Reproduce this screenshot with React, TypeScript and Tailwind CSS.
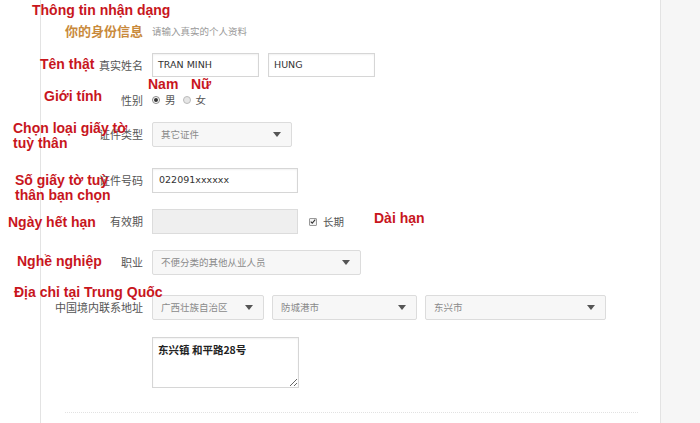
import React from "react";

const cjk = { fontFamily: '"Noto Sans CJK SC", "Liberation Sans", sans-serif' };

const Arrow = () => (
  <span className="h-0 w-0 border-x-[4px] border-t-[5px] border-x-transparent border-t-[#555]" />
);

const Select = ({ text, className }: { text: string; className: string }) => (
  <div
    className={`flex h-[25px] items-center justify-between rounded-[2px] border border-[#dcdcdc] bg-[#f7f7f7] pl-[8px] pr-[10px] text-[9.5px] text-[#8a8a8a] ${className}`}
  >
    <span>{text}</span>
    <Arrow />
  </div>
);

const Row = ({
  label,
  className = "",
  children,
}: {
  label: string;
  className?: string;
  children: React.ReactNode;
}) => (
  <div className={`flex items-center gap-[9px] ${className}`}>
    <div className="w-[102px] shrink-0 text-right text-[11px] text-[#555]">{label}</div>
    {children}
  </div>
);

const Note = ({ text, className }: { text: React.ReactNode; className: string }) => (
  <div
    className={`absolute text-[14px] font-bold leading-[15px] text-[#c8161d] ${className}`}
    style={{ fontFamily: '"Liberation Sans", Arial, sans-serif' }}
  >
    {text}
  </div>
);

export default function App() {
  return (
    <div className="relative flex h-[423px] w-[700px] overflow-hidden bg-white" style={cjk}>
      <div className="w-[40px] shrink-0" />
      <div className="flex w-[621px] shrink-0 flex-col border-x border-[#e3e3e3] pt-[22px]">
        <div className="flex h-[18px] items-center gap-[9px]">
          <div className="w-[102px] shrink-0 text-right text-[13px] font-bold text-[#c98a3c]">
            你的身份信息
          </div>
          <span className="text-[9.5px] text-[#999]">请输入真实的个人资料</span>
        </div>

        <Row label="真实姓名" className="mt-[13px]">
          <div className="flex gap-[9px]">
            {["TRAN MINH", "HUNG"].map((v) => (
              <div
                key={v}
                className="flex h-[24px] w-[107px] items-center border border-[#d6d6d6] px-[5px] text-[9.5px] text-[#333] shadow-[inset_0_1px_2px_rgba(0,0,0,0.06)]"
                style={{ fontFamily: '"DejaVu Sans", sans-serif' }}
              >
                {v}
              </div>
            ))}
          </div>
        </Row>

        <Row label="性别" className="mt-[15px] h-[16px]">
          <div className="flex items-center text-[10.5px] text-[#555]">
            <span className="flex h-[8px] w-[8px] items-center justify-center rounded-full border border-[#888] bg-white">
              <span className="h-[4px] w-[4px] rounded-full bg-[#333]" />
            </span>
            <span className="ml-[5px]">男</span>
            <span className="ml-[7px] h-[8px] w-[8px] rounded-full border border-[#bbb] bg-[#e6e6e6]" />
            <span className="ml-[5px]">女</span>
          </div>
        </Row>

        <Row label="证件类型" className="mt-[14px]">
          <Select text="其它证件" className="w-[140px]" />
        </Row>

        <Row label="证件号码" className="mt-[21px]">
          <div
            className="flex h-[25px] w-[146px] items-center border border-[#d6d6d6] px-[6px] text-[9.5px] text-[#333] shadow-[inset_0_1px_2px_rgba(0,0,0,0.06)]"
            style={{ fontFamily: '"DejaVu Sans", sans-serif' }}
          >
            022091xxxxxx
          </div>
        </Row>

        <Row label="有效期" className="mt-[16px]">
          <div className="h-[25px] w-[146px] border border-[#dcdcdc] bg-[#efefef]" />
          <div className="ml-[2px] flex items-center text-[10.5px] text-[#555]">
            <span className="flex h-[8px] w-[8px] items-center justify-center rounded-[1px] border border-[#999] bg-[#f3f3f3]">
              <svg viewBox="0 0 8 8" className="h-[7px] w-[7px]">
                <path d="M1 4.2 L3 6.2 L7 1.5" fill="none" stroke="#333" strokeWidth="1.4" />
              </svg>
            </span>
            <span className="ml-[6px]">长期</span>
          </div>
        </Row>

        <Row label="职业" className="mt-[16px]">
          <Select text="不便分类的其他从业人员" className="w-[209px]" />
        </Row>

        <Row label="中国境内联系地址" className="mt-[20px]">
          <div className="flex gap-[8px]">
            <Select text="广西壮族自治区" className="w-[112px]" />
            <Select text="防城港市" className="w-[145px]" />
            <Select text="东兴市" className="w-[181px]" />
          </div>
        </Row>

        <Row label="" className="mt-[17px]">
          <textarea
            readOnly
            defaultValue="东兴镇 和平路28号"
            className="h-[51px] w-[147px] border border-[#d6d6d6] px-[5px] pt-[5px] text-[10.5px] font-bold leading-[14px] text-[#222] shadow-[inset_0_1px_2px_rgba(0,0,0,0.06)] outline-none"
          />
        </Row>

        <div className="ml-[24px] mt-[24px] w-[573px] border-t border-dotted border-[#e2e2e2]" />
      </div>
      <div className="flex-1 bg-[#f6f6f6]" />

      <Note text="Thông tin nhận dạng" className="left-[32px] top-[3px]" />
      <Note text="Tên thật" className="left-[40px] top-[57px]" />
      <Note text="Nam" className="left-[148px] top-[77px]" />
      <Note text="Nữ" className="left-[191px] top-[77px]" />
      <Note text="Giới tính" className="left-[44px] top-[89px]" />
      <Note
        text={
          <>
            Chọn loại giấy tờ
            <br />
            tuỳ thân
          </>
        }
        className="left-[13px] top-[121px]"
      />
      <Note
        text={
          <>
            Số giấy tờ tuỳ
            <br />
            thân bạn chọn
          </>
        }
        className="left-[15px] top-[173px]"
      />
      <Note text="Ngày hết hạn" className="left-[8px] top-[215px]" />
      <Note text="Dài hạn" className="left-[374px] top-[211px]" />
      <Note text="Nghề nghiệp" className="left-[17px] top-[254px]" />
      <Note text="Địa chỉ tại Trung Quốc" className="left-[14px] top-[285px]" />
    </div>
  );
}
